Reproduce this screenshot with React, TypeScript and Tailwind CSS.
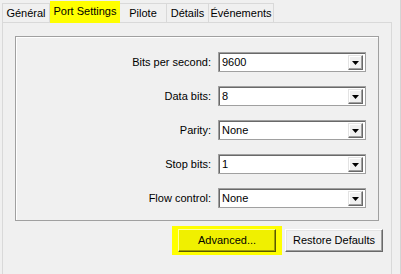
const tabs = [
  { label: 'Général', w: 'w-[48px]' },
  { label: 'Port Settings', w: 'w-[70px]', active: true },
  { label: 'Pilote', w: 'w-[48px]' },
  { label: 'Détails', w: 'w-[43px]' },
  { label: 'Événements', w: 'w-[66px]' },
];

const fields = [
  { label: 'Bits per second:', value: '9600' },
  { label: 'Data bits:', value: '8' },
  { label: 'Parity:', value: 'None' },
  { label: 'Stop bits:', value: '1' },
  { label: 'Flow control:', value: 'None' },
];

const Combo = ({ value }: { value: string }) => (
  <div className="relative w-[148px] h-[20px] bg-white border border-[#a0a0a0] shadow-[inset_1px_1px_0_#696969] flex items-center pl-[3px]">
    <span>{value}</span>
    <div className="absolute right-[2px] top-[2px] w-[15px] h-[15px] bg-[#f0f0f0] border-t border-l border-t-[#e3e3e3] border-l-[#e3e3e3] border-r border-b border-r-[#696969] border-b-[#696969] shadow-[inset_-1px_-1px_0_#a0a0a0,inset_1px_1px_0_#ffffff] flex items-center justify-center">
      <svg width="7" height="4" viewBox="0 0 7 4">
        <path d="M0 0h7L3.5 4z" fill="#000" />
      </svg>
    </div>
  </div>
);

export default function App() {
  return (
    <div
      className="relative w-[401px] h-[274px] overflow-hidden bg-[#f0f0f0] text-[11px] text-black border-r border-r-[#d4d4d4]"
      style={{ fontFamily: '"Liberation Sans", Arial, sans-serif' }}
    >
      <div className="pl-[2px]">
        {/* tab strip */}
        <div className="flex items-end h-[22px]">
          {tabs.map((t) =>
            t.active ? (
              <div
                key={t.label}
                className={`${t.w} h-[22px] bg-[#ffff00] flex items-center justify-center -mb-px relative z-10 pb-[2px]`}
              >
                {t.label}
              </div>
            ) : (
              <div
                key={t.label}
                className={`${t.w} h-[19px] bg-[#f0f0f0] border border-b-0 border-[#d9d9d9] -ml-px first:ml-0 flex items-center justify-center`}
              >
                {t.label}
              </div>
            )
          )}
        </div>

        {/* tab panel */}
        <div className="w-[390px] h-[270px] border border-[#d9d9d9] bg-[#f0f0f0] pl-[12px] pt-[13px]">
          <div className="w-[364px] h-[185px] border border-[#a0a0a0] shadow-[inset_1px_1px_0_#ffffff] pt-[15px] pr-[12px] flex flex-col items-end gap-[14px]">
            {fields.map((f) => (
              <div key={f.label} className="flex items-center gap-[7px]">
                <span>{f.label}</span>
                <Combo value={f.value} />
              </div>
            ))}
          </div>

          <div className="w-[368px] flex justify-end gap-[6px] mt-[8px]">
            <div className="bg-[#ffff00] px-[6px] py-[3px] -my-[3px] -mr-[3px]">
              <button className="w-[98px] h-[23px] bg-[#f0f000] border-t border-l border-t-[#ffffa0] border-l-[#ffffa0] border-r border-b border-r-[#5a5a00] border-b-[#5a5a00] shadow-[inset_-1px_-1px_0_#a0a000]">
                Advanced...
              </button>
            </div>
            <button className="w-[98px] h-[23px] bg-[#f0f0f0] border-t border-l border-t-white border-l-white border-r border-b border-r-[#696969] border-b-[#696969] shadow-[inset_-1px_-1px_0_#a0a0a0,inset_1px_1px_0_#e3e3e3]">
              Restore Defaults
            </button>
          </div>
        </div>
      </div>
    </div>
  );
}
